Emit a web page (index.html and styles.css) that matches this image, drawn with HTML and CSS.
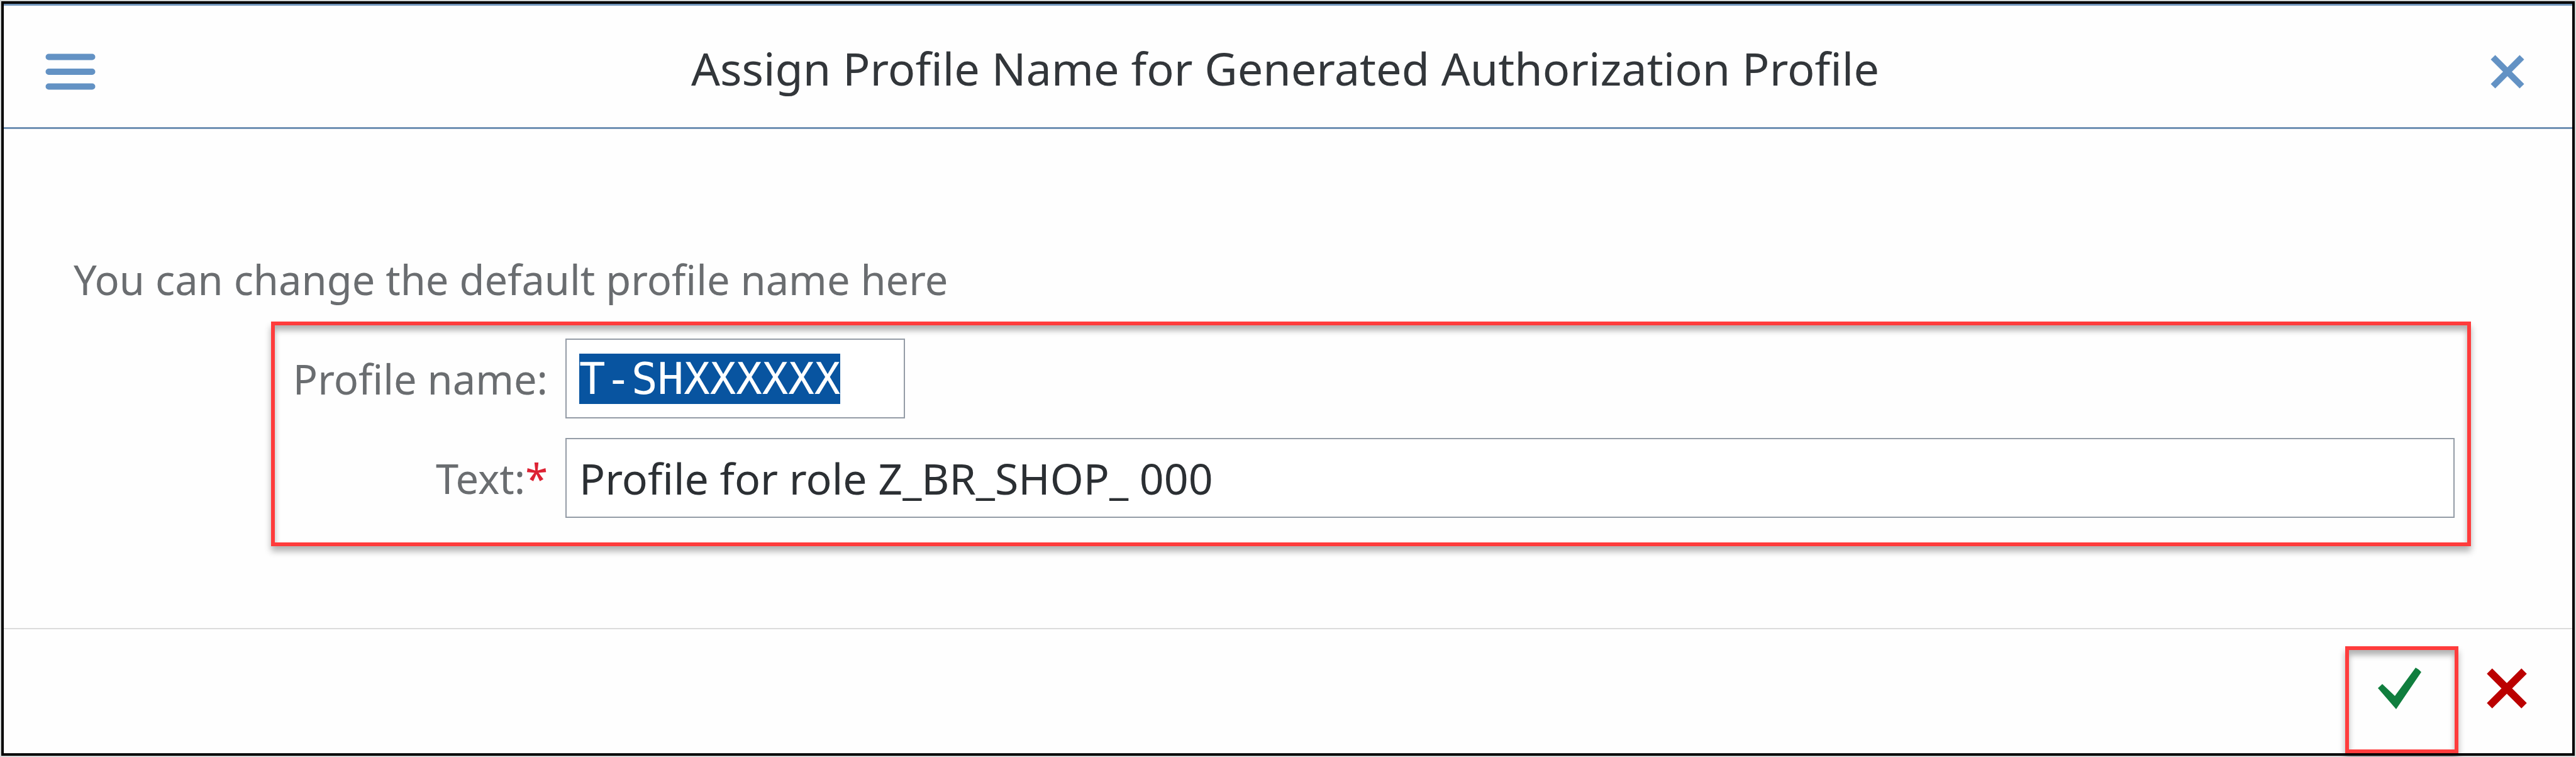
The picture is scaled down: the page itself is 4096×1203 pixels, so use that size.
FILE: index.html
```html
<!DOCTYPE html>
<html lang="en">
<head>
<meta charset="utf-8">
<title>Assign Profile Name</title>
<link rel="stylesheet" href="styles.css">
</head>
<body>
<form class="dialog">
  <header class="dialog-header">
    <button class="icon-button" type="button" aria-label="Menu">
      <svg class="icon-menu" viewBox="0 0 80 58" aria-hidden="true">
        <path d="M5.500 5.500H74.500M5.500 29H74.500M5.500 52.500H74.500"/>
      </svg>
    </button>
    <h1 class="dialog-title">Assign Profile Name for Generated Authorization Profile</h1>
    <button class="icon-button" type="button" aria-label="Close">
      <svg class="icon-close" viewBox="0 0 56 56" aria-hidden="true">
        <path d="M5 5L51 51M51 5L5 51"/>
      </svg>
    </button>
  </header>
  <main class="dialog-body">
    <p class="hint">You can change the default profile name here</p>
    <div class="fields marked">
      <label class="label" for="profile-name">Profile name:</label>
      <input class="field field-name" id="profile-name" type="text" value="T-SHXXXXXX" spellcheck="false">
      <label class="label" for="profile-text">Text:<span class="required">*</span></label>
      <input class="field" id="profile-text" type="text" value="Profile for role Z_BR_SHOP_ 000" spellcheck="false" required>
    </div>
  </main>
  <footer class="dialog-footer">
    <button class="action action-accept marked" type="submit" aria-label="Accept">
      <svg class="icon-accept" viewBox="0 0 70 66" aria-hidden="true">
        <path d="M0 32.500Q4 29 7 26L27 45L60 0Q66 3 69 7L29 66Z"/>
      </svg>
    </button>
    <button class="action action-cancel" type="button" aria-label="Cancel">
      <svg class="icon-cancel" viewBox="0 0 66 66" aria-hidden="true">
        <path d="M5.500 5.500L60.500 60.500M60.500 5.500L5.500 60.500"/>
      </svg>
    </button>
  </footer>
</form>
<script src="script.js"></script>
</body>
</html>
```
FILE: script.js
```js
const profileName = document.getElementById("profile-name");
profileName.focus();
profileName.select();
```
FILE: styles.css
```css
* {
  box-sizing: border-box;
}

body {
  margin: 0;
  padding: 2px;
  background: #d4d8d8;
  font-family: "Noto Sans", "Open Sans", sans-serif;
  font-size: 65px;
  color: #6a6d70;
}

button {
  margin: 0;
  padding: 0;
  border: 0;
  background: none;
}

svg {
  display: block;
}

.dialog {
  display: flex;
  flex-direction: column;
  min-height: calc(100vh - 4px);
  border: 4px solid #000;
  background: #fefefe;
}

.dialog-header {
  display: grid;
  grid-template-columns: 80px 1fr 80px;
  align-items: center;
  height: 199px;
  padding: 16px 75px 0 66px;
  border-top: 3px solid #7094ba;
  border-bottom: 3px solid #6f90b3;
}

.dialog-title {
  margin: 0 0 12px;
  font-size: 72px;
  font-weight: 400;
  line-height: 100px;
  text-align: center;
  color: #32363a;
}

.icon-menu,
.icon-close {
  fill: none;
  stroke: #6392c4;
  stroke-width: 10;
}

.icon-menu {
  width: 80px;
  height: 58px;
  stroke-linecap: round;
}

.icon-close {
  width: 56px;
  height: 56px;
  margin-left: auto;
}

.dialog-body {
  flex: 1;
  padding: 194px 161px 130px 111px;
}

.hint {
  margin: 0 0 22px;
  line-height: 90px;
}

.marked {
  border: 6px solid #ff3c3c;
  box-shadow: 0 8px 10px rgba(0, 0, 0, 0.3), inset 0 8px 10px rgba(0, 0, 0, 0.3);
}

.fields {
  display: grid;
  grid-template-columns: 434px 1fr;
  gap: 31px 28px;
  align-items: center;
  margin-left: 314px;
  padding: 21px 20px 39px 0;
}

.label {
  text-align: right;
  line-height: 90px;
}

.required {
  color: #d23;
}

.field {
  width: 100%;
  height: 127px;
  padding: 0 20px;
  border: 2px solid #949ca6;
  border-radius: 0;
  outline: 0;
  background: #fff;
  font: inherit;
  font-size: 68px;
  line-height: 80px;
  color: #2b2f33;
}

.field-name {
  width: 540px;
  font-family: "DejaVu Sans Mono", monospace;
  font-size: 69px;
}

.field::selection {
  background: #0854a0;
  color: #fff;
}

.dialog-footer {
  display: flex;
  align-items: flex-start;
  justify-content: flex-end;
  gap: 44px;
  padding: 27px 71px 0 0;
  border-top: 2px solid #dcdcdc;
}

.action {
  display: flex;
  justify-content: center;
  width: 180px;
  height: 170px;
  padding-top: 28px;
}

.action-accept {
  padding-right: 6px;
}

.action-cancel {
  width: 66px;
  padding-top: 34px;
}

.icon-accept {
  width: 70px;
  height: 66px;
  fill: #107e3e;
}

.icon-cancel {
  width: 66px;
  height: 66px;
  fill: none;
  stroke: #b00;
  stroke-width: 12;
}
```
